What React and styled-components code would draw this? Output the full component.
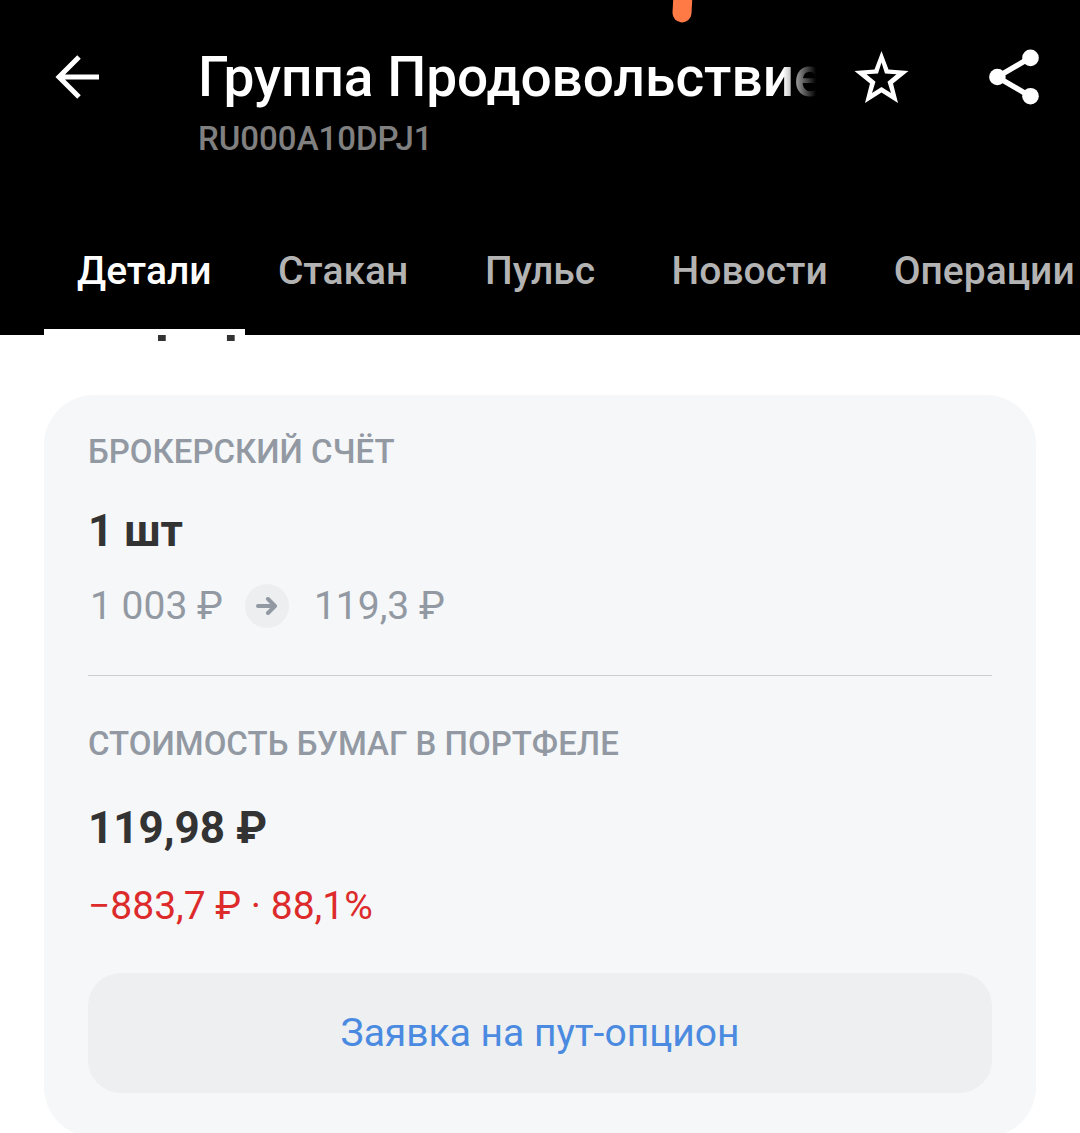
import React from "react";
import styled, { createGlobalStyle } from "styled-components";

const GlobalStyle = createGlobalStyle`
  *, *::before, *::after {
    box-sizing: border-box;
  }

  body {
    margin: 0;
    background: #fff;
    color: #333;
    font-family: Roboto, "Liberation Sans", sans-serif;
  }

  button {
    border: 0;
    padding: 0;
    background: none;
    color: inherit;
    font: inherit;
    cursor: pointer;
  }
`;

const Screen = styled.div`
  height: 100vh;
  overflow-x: hidden;
  overflow-y: auto;
  scrollbar-width: none;
`;

const Header = styled.header`
  position: sticky;
  top: 0;
  z-index: 1;
  background: #000;
  color: #fff;
`;

const Marker = styled.svg`
  position: absolute;
  top: 0;
  left: 672px;
`;

const Toolbar = styled.div`
  display: flex;
  align-items: flex-start;
  padding: 44px 33px 0 44px;
`;

const IconButton = styled.button`
  display: flex;
  align-items: center;
  justify-content: center;
  flex: none;
  width: 66px;
  height: 66px;
`;

const Titles = styled.div`
  flex: 1;
  min-width: 0;
  margin: 0 33px 0 88px;
`;

const Title = styled.h1`
  margin: 0;
  overflow: hidden;
  font-size: 55px;
  line-height: 66px;
  font-weight: 500;
  white-space: nowrap;
  mask-image: linear-gradient(to left, transparent, #000 33px);
`;

const Isin = styled.p`
  margin: 9px 0 0;
  color: #808080;
  font-size: 33px;
  line-height: 40px;
  font-weight: 500;
`;

const Actions = styled.div`
  display: flex;
  gap: 66px;
`;

const Tabs = styled.nav`
  display: flex;
  height: 122px;
  margin-top: 54px;
  padding-left: 44px;
  overflow: hidden;
`;

const Tab = styled.button`
  flex: none;
  min-width: 197px;
  && {
    padding: 0 33px;
    border-bottom: 6px solid ${props => (props.$active ? "#fff" : "transparent")};
    color: ${props => (props.$active ? "#fff" : "#b3b3b3")};
    font-size: 39px;
    line-height: 44px;
    font-weight: 500;
  }
`;

const Content = styled.main`
  padding: 0 44px 44px;
`;

const Heading = styled.h2`
  margin: -60px 0 48px;
  font-size: 55px;
  line-height: 72px;
  font-weight: 700;
`;

const Card = styled.section`
  padding: 35px 44px 44px;
  border-radius: 50px;
  background: #f5f7f9;
`;

const Label = styled.h3`
  margin: 0;
  color: #9299a2;
  font-size: 33px;
  line-height: 44px;
  font-weight: 500;
`;

const Amount = styled.p`
  margin: ${props => (props.$loose ? "36px 0 30px" : "31px 0 27px")};
  font-size: 44px;
  line-height: 52px;
  font-weight: 700;
`;

const Prices = styled.div`
  display: flex;
  align-items: center;
  padding-left: 2px;
  color: #9299a2;
  font-size: 39px;
  line-height: 44px;
`;

const Badge = styled.span`
  display: flex;
  align-items: center;
  justify-content: center;
  width: 44px;
  height: 44px;
  margin: 0 25px 0 22px;
  border-radius: 50%;
  background: #eceef0;
`;

const Divider = styled.hr`
  margin: 47px 0 46px;
  border: 0;
  border-top: 1px solid #c9cdd2;
`;

const Loss = styled.p`
  margin: 0 0 45px;
  color: #dd2b2b;
  font-size: 39px;
  line-height: 44px;
`;

const OrderButton = styled.button`
  width: 100%;
  height: 120px;
  && {
    border-radius: 33px;
    background: #edeff1;
    color: #4a8ae0;
    font-size: 39px;
  }
`;

const BackIcon = () => (
  <svg width="46" height="46" viewBox="0 0 46 46" fill="none" stroke="#fff" strokeWidth="5">
    <path d="M25 3 5 23l20 20M4 23h41" />
  </svg>
);

const StarIcon = () => (
  <svg width="64" height="64" viewBox="0 0 64 64" fill="#fff">
    <path
      fillRule="evenodd"
      d="M31.5 6l7 18.5 20 1.5L43 38.5 48 58 31.5 47.5 15 58l5-19.500L4.500 26l20-1.500zM31.500 17.500L28 28.500l-11.500.8L25.500 36.800 22 48l9.500-6 9.500 6-3.500-11.200 9-7.500-11.500-.8z"
    />
  </svg>
);

const ShareIcon = () => (
  <svg width="64" height="64" viewBox="0 0 64 64" fill="#fff">
    <path d="M48.300 12.700 15.300 32l33 19.300" fill="none" stroke="#fff" strokeWidth="5.500" />
    <circle cx="48.500" cy="12.900" r="8.300" />
    <circle cx="15.400" cy="32" r="8.300" />
    <circle cx="48.500" cy="51.200" r="8.300" />
  </svg>
);

const ArrowIcon = () => (
  <svg
    width="22"
    height="18"
    viewBox="0 0 22 18"
    fill="none"
    stroke="#9299a2"
    strokeWidth="4"
    strokeLinecap="round"
    strokeLinejoin="round"
  >
    <path d="M2 9h17M12 2l7 7-7 7" />
  </svg>
);

const TABS = ["Детали", "Стакан", "Пульс", "Новости", "Операции"];

const App = () => (
  <>
    <GlobalStyle />
    <Screen>
      <Header>
        <Marker width="22" height="24" viewBox="0 0 22 24">
          <path d="M11 -6 10 13" stroke="#ff7a45" strokeWidth="19" strokeLinecap="round" />
        </Marker>
        <Toolbar>
          <IconButton aria-label="Назад">
            <BackIcon />
          </IconButton>
          <Titles>
            <Title>Группа Продовольствие</Title>
            <Isin>RU000A10DPJ1</Isin>
          </Titles>
          <Actions>
            <IconButton aria-label="В избранное">
              <StarIcon />
            </IconButton>
            <IconButton aria-label="Поделиться">
              <ShareIcon />
            </IconButton>
          </Actions>
        </Toolbar>
        <Tabs>
          {TABS.map((name, i) => (
            <Tab key={name} $active={i === 0}>
              {name}
            </Tab>
          ))}
        </Tabs>
      </Header>
      <Content>
        <Heading>В портфеле</Heading>
        <Card>
          <Label>БРОКЕРСКИЙ СЧЁТ</Label>
          <Amount>1 шт</Amount>
          <Prices>
            <span>1 003 ₽</span>
            <Badge>
              <ArrowIcon />
            </Badge>
            <span>119,3 ₽</span>
          </Prices>
          <Divider />
          <Label>СТОИМОСТЬ БУМАГ В ПОРТФЕЛЕ</Label>
          <Amount $loose>119,98 ₽</Amount>
          <Loss>−883,7 ₽ · 88,1%</Loss>
          <OrderButton>Заявка на пут-опцион</OrderButton>
        </Card>
      </Content>
    </Screen>
  </>
);

export default App;
